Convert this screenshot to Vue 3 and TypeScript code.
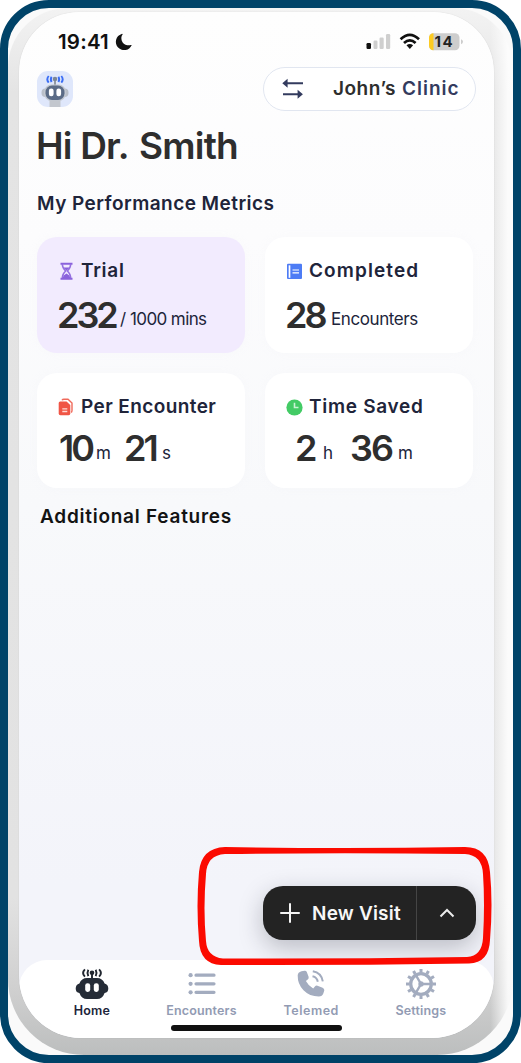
<script setup lang="ts">
interface Part { text: string; kind: 'num' | 'unit'; cls: string }
interface Metric { id: string; title: string; parts: Part[] }
const metrics: Metric[] = [
  { id: 'trial', title: 'Trial', parts: [
    { text: '232', kind: 'num', cls: 'w58' }, { text: '/', kind: 'unit', cls: 'slash' }, { text: '1000 mins', kind: 'unit', cls: 'mins' }] },
  { id: 'completed', title: 'Completed', parts: [
    { text: '28', kind: 'num', cls: 'w46' }, { text: 'Encounters', kind: 'unit', cls: 'enc' }] },
  { id: 'per', title: 'Per Encounter', parts: [
    { text: '10', kind: 'num', cls: 'ten' }, { text: 'm', kind: 'unit', cls: 'm1' },
    { text: '21', kind: 'num', cls: 'w38' }, { text: 's', kind: 'unit', cls: 's1' }] },
  { id: 'saved', title: 'Time Saved', parts: [
    { text: '2', kind: 'num', cls: 'two' }, { text: 'h', kind: 'unit', cls: 'h1' },
    { text: '36', kind: 'num', cls: 'w48' }, { text: 'm', kind: 'unit', cls: 'm2' }] },
]
const tabs = ['Home', 'Encounters', 'Telemed', 'Settings']
const teeth = Array.from({ length: 12 }, (_, i) => i * 30)
</script>

<template>
  <div class="frame">
    <div class="device">
      <main class="screen">
        <div class="status">
          <span class="time">19:41</span>
          <svg class="moon" width="18" height="18" viewBox="0 0 18 18"><path d="M6.600.9A8.300 8.300 0 1 0 16.900 11.800C15.500 12.500 9.800 13 7.500 9.200C5.700 6.200 6.200 2.800 7.800 1.300Q7.500.6 6.600.9Z" fill="#111" /></svg>
          <svg class="signals" width="98" height="20" viewBox="0 0 98 20">
            <rect x="0.500" y="11" width="4.500" height="6" rx="1.200" fill="#111" />
            <rect x="7.500" y="8.500" width="4" height="8.500" rx="1.200" fill="#cfcfcf" />
            <rect x="13.500" y="5.500" width="4.200" height="11.500" rx="1.200" fill="#cfcfcf" />
            <rect x="20" y="2" width="4.200" height="15" rx="1.200" fill="#cfcfcf" />
            <g fill="none" stroke="#111" stroke-width="2.700"><path d="M34.600 7.200Q43.800-1.500 53 7.200M38 11Q43.800 5.600 49.600 11" /></g>
            <path d="M40.500 13.300Q43.800 10.600 47.100 13.300L43.800 17Z" fill="#111" />
            <rect x="63" y="1.200" width="30.500" height="17" rx="4.500" fill="#cdcdcd" />
            <path d="M67.500 1.200V18.200A4.500 4.500 0 0 1 63 13.700V5.700A4.500 4.500 0 0 1 67.500 1.200Z" fill="#fdcb22" />
            <path d="M95 7.200Q97 7.900 97 9.700T95 12.200Z" fill="#cdcdcd" />
            <text x="68.600" y="15" textLength="18" class="battery">14</text>
          </svg>
        </div>

        <header class="top">
          <svg class="avatar" width="36" height="36" viewBox="0 0 36 36">
            <rect width="36" height="36" rx="11" fill="#dfe7fb" />
            <path d="M12.500 29H23.500V36H12.500Z" fill="#c3c7ce" />
            <path d="M18 8V15" stroke="#9299a3" stroke-width="2" />
            <circle cx="18" cy="8" r="2.300" fill="#7d8796" />
            <g fill="none" stroke="#3b6ef5" stroke-width="1.900"><path d="M14.600 5.700Q13 8.300 14.600 11M21.400 5.700Q23 8.300 21.400 11M11.700 5Q8.900 8.300 11.700 11.700M24.300 5Q27.100 8.300 24.300 11.700" /></g>
            <rect x="4.500" y="17.500" width="27" height="8.500" rx="4" fill="#b9bfc9" />
            <rect x="7" y="13.500" width="22" height="16.500" rx="7.500" fill="#c3c8d0" />
            <rect x="8.500" y="14.500" width="19" height="14.500" rx="6.500" fill="#5b6b86" />
            <rect x="11.900" y="17.500" width="4.700" height="7.800" rx="2.200" fill="#fff" /><rect x="19.400" y="17.500" width="4.700" height="7.800" rx="2.200" fill="#fff" />
          </svg>
          <div class="clinic">
            <svg width="22" height="22" viewBox="0 0 22 22" fill="none" stroke="#333b5e" stroke-width="1.900">
              <path d="M4 5.300H21M1 16.300H17" /><path d="M5.600 .8L.3 5.300L5.600 9.800ZM15.600 11.800L20.900 16.300L15.600 20.800Z" fill="#333b5e" stroke="none" />
            </svg>
            <span class="john">John’s</span><span class="cl">Clinic</span>
          </div>
        </header>

        <h1><span class="hi">Hi Dr.</span><span class="smith">Smith</span></h1>
        <h2 class="perf">My Performance Metrics</h2>

        <section class="grid">
          <article v-for="m in metrics" :key="m.id" class="card" :class="m.id">
            <div class="label">
              <svg v-if="m.id === 'trial'" width="17" height="18" viewBox="0 0 17 18">
                <path d="M2.500 1.800H14.500M2.500 16.800H14.500" stroke="#8a62dc" stroke-width="1.900" />
                <path d="M4.300 2Q4.300 6 7.600 9Q4.300 12 4.300 16M12.700 2Q12.700 6 9.400 9Q12.700 12 12.700 16" fill="none" stroke="#9470e0" stroke-width="1.500" />
                <path d="M5.500 5.500H11.500L8.500 8.800ZM4.500 16Q5.500 12.500 8.500 11.500Q11.500 12.500 12.500 16Z" fill="#8a62dc" />
              </svg>
              <svg v-else-if="m.id === 'completed'" width="17" height="18" viewBox="0 0 17 18">
                <rect x="1" y="1.800" width="15" height="15.200" rx="1" fill="#4d7cf5" />
                <path d="M3.500 3.300V15.800" stroke="#fff" stroke-width="1.700" /><path d="M6.500 8H13M6.500 10.800H13" stroke="#fff" stroke-width="1.200" />
              </svg>
              <svg v-else-if="m.id === 'per'" width="17" height="18" viewBox="0 0 17 18">
                <path d="M4 2.200Q4.500 1.200 6 1.200H10L14 5V12.500Q14 14 13 14.300" fill="none" stroke="#f06a5b" stroke-width="1.400" />
                <path d="M2.200 3.400H8.500L12.300 7V15.500Q12.300 17.200 10.700 17.200H2.400Q.7 17.200 .7 15.500V5Q.7 3.400 2.200 3.400Z" fill="#f05545" />
                <path d="M4.300 10.800H9.300M4.300 13.500H9.300" stroke="#ffd9d4" stroke-width="1.300" />
              </svg>
              <svg v-else width="17" height="18" viewBox="0 0 17 18">
                <circle cx="8.500" cy="9.500" r="8.100" fill="#43cb65" /><path d="M8.500 4.700V9.500H12.500" fill="none" stroke="#c9f3d4" stroke-width="1.600" />
              </svg>
              <span>{{ m.title }}</span>
            </div>
            <div class="values"><span v-for="(p, i) in m.parts" :key="i" :class="[p.kind, p.cls]">{{ p.text }}</span></div>
          </article>
        </section>
        <h2 class="features">Additional Features</h2>

        <div class="fab">
          <button class="visit">
            <svg width="20" height="20" viewBox="0 0 20 20"><path d="M10 1V19M1 10H19" stroke="#f4f4f4" stroke-width="2" stroke-linecap="round" /></svg>
            <span>New Visit</span>
          </button>
          <button class="more"><svg width="16" height="10" viewBox="0 0 16 10"><path d="M1.500 8.500L8 2L14.500 8.500" fill="none" stroke="#ececec" stroke-width="2" /></svg></button>
        </div>

        <nav>
          <div v-for="t in tabs" :key="t" class="tab" :class="t.toLowerCase()">
            <svg v-if="t === 'Home'" width="34" height="32" viewBox="0 0 34 32">
              <path d="M17 5V13" stroke="#20262f" stroke-width="1.900" /><circle cx="17" cy="4.800" r="2.300" fill="#20262f" />
              <g fill="none" stroke="#20262f" stroke-width="1.900"><path d="M13.300 1.800Q11.700 4.900 13.300 8.200M20.700 1.800Q22.300 4.900 20.700 8.200M9.900 1.300Q6.300 4.900 9.900 8.600M24.100 1.300Q27.700 4.900 24.100 8.600" /></g>
              <path d="M12 10H22Q27.500 10 29.600 15.500Q33.300 16.500 33.300 20.500T29.600 25Q27.500 31 22 31H12Q6.500 31 4.400 25Q.7 24.500 .7 20.500T4.400 15.500Q6.500 10 12 10Z" fill="#252c37" />
              <rect x="10.200" y="15.300" width="5" height="8.600" rx="2.300" fill="#fff" /><rect x="18.800" y="15.300" width="5" height="8.600" rx="2.300" fill="#fff" />
            </svg>
            <svg v-else-if="t === 'Encounters'" width="34" height="32" viewBox="0 0 34 32">
              <g stroke="#a3acbf" stroke-width="3.200" stroke-linecap="round"><path d="M11 7.200H29M11 15.800H29M11 24.300H29" /></g>
              <g fill="#a3acbf"><circle cx="5.600" cy="7.200" r="2.100" /><circle cx="5.600" cy="15.800" r="2.100" /><circle cx="5.600" cy="24.300" r="2.100" /></g>
            </svg>
            <svg v-else-if="t === 'Telemed'" width="34" height="32" viewBox="0 0 34 32">
              <path d="M7.500 3.300L10.500 2.700Q12.200 2.500 12.800 4.100L14.600 8.800Q15 10.300 14 11.300L11.900 13.100Q14.300 17.900 19.200 20.500L21.100 18.200Q22.100 17.200 23.500 17.800L28.600 19.800Q30.600 20.700 30.300 22.500L29.300 25.500Q28.300 28.500 24.800 28.500Q15.500 28.500 9.500 22.300Q3.500 16 3.700 7.500Q3.800 4.300 7.500 3.300Z" fill="#a3acbf" />
              <path d="M18.500 8.300Q23 9.300 23.800 13.800M18.800 3.300Q27.300 4.800 28.800 13.300" fill="none" stroke="#a3acbf" stroke-width="2" />
            </svg>
            <svg v-else width="34" height="32" viewBox="0 0 34 32">
              <g fill="none" stroke="#a3acbf"><circle cx="17" cy="16" r="10.300" stroke-width="3.300" />
                <path d="M17 16H27M17 16L12 7.300M17 16L12 24.700" stroke-width="2.400" />
                <path v-for="a in teeth" :key="a" d="M17 4.500V1" :transform="`rotate(${a} 17 16)`" stroke-width="3" /></g>
              <circle cx="17" cy="16" r="2.700" fill="#a3acbf" />
            </svg>
            <span>{{ t }}</span>
          </div>
          <i class="indicator"></i>
        </nav>
      </main>
    </div>
    <svg class="marker" width="300" height="124" viewBox="0 0 300 124">
      <path fill-rule="evenodd" fill="#fb0a00" d="M30 3Q150 5 270 3Q293 3 295 28Q298 60 295 96Q294 119 274 119.500Q150 121.500 26 121Q5 120 4 97Q1 62 4 28Q6 4 30 3ZM30 10Q12 11 11 30Q8 65 11 97Q12 113 28 114.500Q150 115 272 113Q287 112 288 94Q290 60 288 30Q287 11 270 10Q150 8.500 30 10Z" />
    </svg>
  </div>
</template>

<style>
body { margin: 0; background: #fff; }
</style>
<style scoped>
.frame { position: relative; box-sizing: border-box; width: 521px; height: 1063px; border: 8px solid #004368; border-radius: 49px; background: #fafafa; overflow: hidden; font-family: Inter, "Liberation Sans", sans-serif; color: #20243a; }
.device { box-sizing: border-box; width: 505px; height: 1047px; padding: 4px 19px 17px 11px; border-radius: 60px 60px 76px 76px; background: linear-gradient(90deg, #fff0 95.500%, #fffd 99%), linear-gradient(#f3f3f3, #e4e4e4 8%, #e2e2e2 85%, #cfcfcf 94%, #bcbebe); }
.screen { display: flex; flex-direction: column; width: 475px; height: 1026px; border-radius: 60px 60px 62px 62px; overflow: hidden; background: linear-gradient(#fefefe, #fcfcfd 22%, #f8f9fb 48%, #f3f4fa 85%); box-shadow: 0 0 1px #0003; }
.status { display: flex; align-items: center; height: 59px; padding-left: 39px; }
.time { width: 56px; font-size: 20.500px; font-weight: 600; color: #111; letter-spacing: .2px; }
.moon { margin-left: 1px; }
.signals { margin-left: 233px; }
.battery { font: 700 15px Inter, sans-serif; fill: #222; }
.top { display: flex; height: 44px; margin: -4px 0 0; padding-left: 18px; align-items: center; }
.clinic { box-sizing: border-box; display: flex; align-items: center; width: 213px; height: 44px; margin-left: 190px; border: 1.500px solid #e1e6f0; border-radius: 22px; background: #fff; padding-left: 18px; font-size: 19px; font-weight: 600; white-space: nowrap; }
.clinic span { margin-top: -2px; }
.john { width: 69px; margin-left: 29px; color: #2e2e2e; letter-spacing: .5px; }
.cl { color: #333b5e; letter-spacing: 1px; }
h1, h2 { margin: 0; white-space: nowrap; }
h1 { display: flex; height: 48px; line-height: 48px; margin: 11px 0 0 17px; font-size: 37px; font-weight: 600; color: #2e2e2e; letter-spacing: -.8px; }
.hi { width: 103px; }
h2 { height: 28px; line-height: 28px; font-size: 19px; font-weight: 600; letter-spacing: .45px; }
.perf { margin: 20px 0 19px 18px; }
.grid { display: grid; grid-template-columns: 208px 208px; grid-template-rows: 116px 115px; gap: 20px; margin-left: 18px; }
.card { border-radius: 20px; background: #fff; box-shadow: 0 0 8px #e7ebf322; }
.trial { background: #f2ebfe; }
.label { display: flex; align-items: center; height: 24px; margin: 22px 0 0 21px; font-size: 19px; font-weight: 600; white-space: nowrap; }
.label span { margin: -1px 0 0 6px; }
.trial .label { letter-spacing: .7px; }
.completed .label { letter-spacing: 1.100px; }
.per .label { letter-spacing: .4px; }
.saved .label { letter-spacing: .7px; }
.values { display: flex; align-items: baseline; height: 46px; margin: 9px 0 0 20px; white-space: nowrap; }
.per .values, .saved .values { margin-top: 6px; }
.num { font-size: 36px; line-height: 46px; font-weight: 600; color: #2e2e2e; letter-spacing: -3px; }
.unit { position: relative; top: -3.500px; font-size: 17px; font-weight: 400; letter-spacing: -.6px; }
.per .unit, .saved .unit { top: -2px; }
.w58 { width: 63px; } .slash { width: 10px; } .w46 { width: 46px; } .enc { letter-spacing: -.4px; }
.ten { width: 37px; margin-left: 2px; } .m1 { width: 28px; } .w38 { width: 38px; }
.two { width: 28px; margin-left: 10px; } .h1 { width: 27px; } .w48 { width: 48px; letter-spacing: -2px; }
.features { margin: 15px 0 0 21px; color: #131313; letter-spacing: .75px; }
.fab { display: flex; width: 213px; height: 54px; margin: 355px 0 20px 244px; border-radius: 20px; background: #232323; box-shadow: 0 8px 24px #1f233044; }
button { border: 0; padding: 0; background: none; color: #f7f7f7; font: 600 19px Inter, sans-serif; display: flex; align-items: center; }
.visit { width: 154px; padding-left: 17px; box-sizing: border-box; white-space: nowrap; border-right: 1px solid #454545; letter-spacing: .2px; }
.visit span { margin-left: 12px; }
.more { flex: 1; justify-content: center; }
nav { position: relative; display: flex; flex: 1; box-sizing: border-box; padding: 8px 0 0 18px; background: #fff; border-radius: 28px 28px 0 0; }
.tab { display: flex; flex-direction: column; align-items: center; width: 109.700px; color: #929bb3; font-size: 12.500px; font-weight: 600; letter-spacing: .15px; }
.tab span { margin-top: 2px; line-height: 17px; }
.tab.home { color: #20243a; }
.tab.telemed { letter-spacing: .5px; }
.indicator { position: absolute; left: 152px; top: 65px; width: 171px; height: 6px; border-radius: 3px; background: #101010; }
.marker { position: absolute; left: 187px; top: 836px; }
</style>
